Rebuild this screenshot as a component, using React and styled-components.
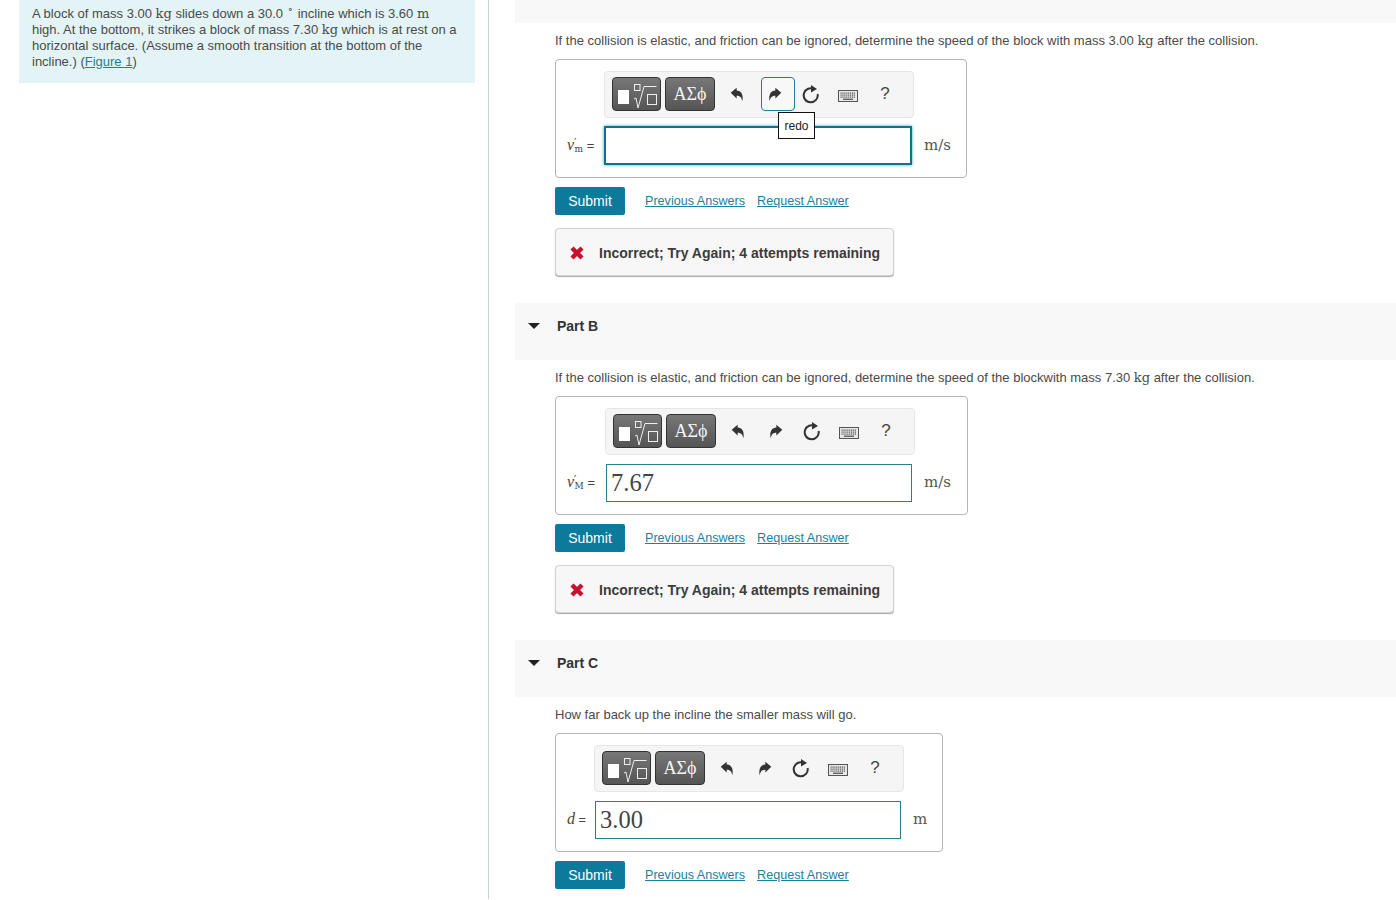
import React from 'react';
import styled, { createGlobalStyle } from 'styled-components';

const Global = createGlobalStyle`
html, body {
  margin: 0;
  padding: 0;
  height: 900px;
  overflow: hidden;
  background: #fff;
}
body {
  font-family: "Liberation Sans", Arial, sans-serif;
  color: #4a4a4a;
}
`

function UndoIcon({ flip }) {
  return (
    <svg width="14" height="15" viewBox="0 0 16 16" preserveAspectRatio="none" style={flip ? { transform: 'scaleX(-1)' } : undefined}>
      <path d="M0.8 6.2 L7.6 0.8 V3.8 C12.4 3.8 15.6 7.6 14.2 15.2 C13.2 11 11.4 9.3 7.6 9.3 V12.2 Z" fill="#333" />
    </svg>
  )
}

function ReloadIcon() {
  return (
    <svg width="18" height="20" viewBox="0 0 18 20">
      <path d="M12.2 5.2 A7 7 0 1 0 15.6 10" fill="none" stroke="#333" strokeWidth="2" />
      <path d="M9 1 L15 5 L9 8.4 Z" fill="#333" />
    </svg>
  )
}

function KeyboardIcon() {
  const keys = []
  for (let r = 0; r < 3; r++) {
    for (let c = 0; c < 8; c++) {
      keys.push(<rect key={r + '-' + c} x={2.5 + c * 1.9} y={2.5 + r * 2} width="1.2" height="1.2" fill="#555" />)
    }
  }
  return (
    <KeyboardSvg width="20" height="12" viewBox="0 0 20 12">
      <rect x="0.5" y="0.5" width="19" height="11" fill="#e8e8e8" stroke="#555" />
      {keys}
      <rect x="5" y="8.6" width="10" height="1.3" fill="#555" />
    </KeyboardSvg>
  )
}

function TemplateIcon() {
  return (
    <svg width="47" height="32" viewBox="0 0 47 32">
      <rect x="5" y="12" width="11" height="14" fill="#fff" />
      <rect x="21.5" y="6.5" width="5.5" height="6" fill="none" stroke="#eee" />
      <path d="M21 21 L23 20 L25 30 L31 8.5 H43.5" fill="none" stroke="#eee" />
      <rect x="34.5" y="16.5" width="9" height="10" fill="none" stroke="#eee" />
    </svg>
  )
}

function CrossIcon() {
  return (
    <svg width="14" height="14" viewBox="0 0 14 14">
      <path d="M2 2 L12 12 M12 2 L2 12" stroke="#c8102e" strokeWidth="4.4" />
    </svg>
  )
}

function MathLabel({ base, sub, prime }) {
  return (
    <Label>
      <Ital>{base}</Ital>
      {prime && <Prime>′</Prime>}
      {sub && <Sub>{sub}</Sub>}
      <Eq> =</Eq>
    </Label>
  )
}

function AnswerBox({ width, labelWidth, base, sub, prime, value, unit, focused }) {
  return (
    <Box $width={width} $labelWidth={labelWidth}>
      <Toolbar>
        <DarkButton $width={49}><TemplateIcon /></DarkButton>
        <DarkButton $width={50}>ΑΣϕ</DarkButton>
        <ToolButton $left={115}><UndoIcon /></ToolButton>
        <ToolButton $left={focused ? 156 : 153} $active={focused}>
          <UndoIcon flip />
          {focused && <Tooltip>redo</Tooltip>}
        </ToolButton>
        <ToolButton $left={189}><ReloadIcon /></ToolButton>
        <ToolButton $left={226}><KeyboardIcon /></ToolButton>
        <ToolButton $left={263}><Help>?</Help></ToolButton>
      </Toolbar>
      <MathLabel base={base} sub={sub} prime={prime} />
      <Input $focused={focused}>{value}</Input>
      <Unit $focused={focused}>{unit}</Unit>
    </Box>
  )
}

function Part({ title, height, prompt, feedback, children }) {
  return (
    <section>
      <PartHeader $height={height}>
        {title && <Caret />}
        {title && <PartTitle>{title}</PartTitle>}
      </PartHeader>
      <PartBody>
        <Prompt>{prompt}</Prompt>
        {children}
        <Actions>
          <Submit>Submit</Submit>
          <ActionLink href="#">Previous Answers</ActionLink>
          <ActionLink href="#">Request Answer</ActionLink>
        </Actions>
        {feedback && (
          <Feedback>
            <CrossIcon />
            <span>Incorrect; Try Again; 4 attempts remaining</span>
          </Feedback>
        )}
      </PartBody>
    </section>
  )
}

export default function App() {
  return (
    <Page>
      <Global />
      <LeftColumn>
        <Intro>
          A block of mass 3.00 <MathText>kg</MathText> slides down a 30.0 <Degree>∘</Degree> incline which is 3.60 <MathText>m</MathText> high.
          At the bottom, it strikes a block of mass 7.30 <MathText>kg</MathText> which is at rest on a horizontal surface. (Assume a smooth
          transition at the bottom of the incline.) (<FigureLink href="#">Figure 1</FigureLink>)
        </Intro>
      </LeftColumn>
      <RightColumn>
        <Part
          height={23}
          feedback
          prompt={<>If the collision is elastic, and friction can be ignored, determine the speed of the block with mass 3.00 <MathText>kg</MathText> after the collision.</>}
        >
          <AnswerBox width={412} labelWidth={38} base="v" prime sub="m" unit="m/s" focused />
        </Part>
        <Part
          title="Part B"
          height={57}
          feedback
          prompt={<>If the collision is elastic, and friction can be ignored, determine the speed of the blockwith mass 7.30 <MathText>kg</MathText> after the collision.</>}
        >
          <AnswerBox width={413} labelWidth={39} base="v" prime sub="M" value="7.67" unit="m/s" />
        </Part>
        <Part title="Part C" height={57} prompt="How far back up the incline the smaller mass will go.">
          <AnswerBox width={388} labelWidth={28} base="d" value="3.00" unit="m" />
        </Part>
      </RightColumn>
    </Page>
  )
}

const Page = styled.div`
display: flex;
height: 900px;
overflow: hidden;
`
const LeftColumn = styled.aside`
width: 489px;
flex: none;
box-sizing: border-box;
border-right: 1px solid #c6d0de;
padding-left: 19px;
height: 899px;
`
const Intro = styled.div`
width: 456px;
height: 83px;
box-sizing: border-box;
background: #e4f4f6;
padding: 6px 17px 0 13px;
font-size: 13px;
line-height: 16px;
`
const MathText = styled.span`
font-family: "DejaVu Serif", serif;
font-size: 13px;
`
const Degree = styled.sup`
font-family: "DejaVu Serif", serif;
font-size: 11px;
line-height: 0;
margin: 0 1px;
`
const FigureLink = styled.a`
color: #1c7f9c;
`
const RightColumn = styled.main`
flex: 1;
padding-left: 26px;
min-width: 0;
`
const PartHeader = styled.div`
height: ${props => props.$height}px;
background: #f8f8f8;
display: flex;
align-items: center;
padding: 0 0 ${props => props.$height > 30 ? 11 : 0}px 13px;
box-sizing: border-box;
`
const Caret = styled.span`
width: 0;
height: 0;
border-left: 6px solid transparent;
border-right: 6px solid transparent;
border-top: 6px solid #222;
margin-right: 17px;
`
const PartTitle = styled.span`
font-size: 14px;
font-weight: 700;
color: #333;
`
const PartBody = styled.div`
padding-left: 40px;
padding-bottom: 27px;
`
const Prompt = styled.div`
font-size: 13px;
line-height: 36px;
height: 36px;
white-space: nowrap;
`
const Box = styled.div`
width: ${props => props.$width}px;
height: 119px;
box-sizing: border-box;
border: 1px solid #b4b4b4;
border-radius: 4px;
padding: 11px 0 0 11px;
display: grid;
grid-template-columns: ${props => props.$labelWidth}px 306px auto;
grid-template-rows: 47px 39px;
row-gap: 8px;
align-items: center;
`
const Toolbar = styled.div`
grid-column: 2 / 4;
position: relative;
width: 310px;
height: 47px;
margin-left: -1px;
box-sizing: border-box;
background: #f5f5f5;
border: 1px solid #e6e6e6;
border-radius: 4px;
display: flex;
align-items: flex-start;
gap: 4px;
padding: 5px 0 0 7px;
`
const DarkButton = styled.div`
width: ${props => props.$width}px;
height: 34px;
box-sizing: border-box;
border: 1px solid #333;
border-radius: 4px;
background: linear-gradient(#777, #555);
color: #f4f4f4;
font-family: "Liberation Serif", serif;
font-size: 18px;
display: flex;
align-items: center;
justify-content: center;
`
const ToolButton = styled.div`
position: absolute;
left: ${props => props.$left}px;
top: 5px;
width: 34px;
height: 34px;
box-sizing: border-box;
display: flex;
align-items: center;
justify-content: center;
padding-right: ${props => props.$active ? 6 : 0}px;
border: 1px solid ${props => props.$active ? '#1d7f96' : 'transparent'};
border-radius: 4px;
background: ${props => props.$active ? '#f8f8f8' : 'transparent'};
`
const KeyboardSvg = styled.svg`
margin-top: 3px;
`
const Help = styled.span`
font-size: 17px;
color: #444;
`
const Tooltip = styled.div`
position: absolute;
left: 16px;
top: 34px;
width: 37px;
height: 27px;
box-sizing: border-box;
border: 1px solid #111;
background: #fff;
color: #222;
font-size: 12px;
display: flex;
align-items: center;
justify-content: center;
z-index: 2;
`
const Label = styled.div`
font-family: "Liberation Serif", serif;
font-size: 15px;
color: #444;
white-space: nowrap;
padding-bottom: 2px;
`
const Ital = styled.i`
font-size: 16px;
`
const Prime = styled.span`
font-family: "DejaVu Sans", sans-serif;
font-size: 11px;
vertical-align: 4px;
`
const Sub = styled.span`
font-family: "DejaVu Serif", serif;
font-size: 9px;
vertical-align: -2px;
margin-left: -2px;
`
const Eq = styled.span`
font-family: "Liberation Sans", sans-serif;
font-size: 13px;
`
const Input = styled.div`
height: ${props => props.$focused ? 39 : 38}px;
align-self: end;
box-sizing: border-box;
background: #fff;
border: ${props => props.$focused ? '2px solid #14718a' : '1px solid #2a7f8f'};
box-shadow: ${props => props.$focused ? '0 0 3px #3aa5c0' : 'none'};
margin: ${props => props.$focused ? '0 -1px' : '0'};
font-family: "Liberation Serif", serif;
font-size: 24.5px;
color: #444;
line-height: 35px;
padding-left: 4px;
`
const Unit = styled.div`
font-family: "DejaVu Serif", serif;
font-size: 15px;
color: #555;
margin-left: ${props => props.$focused ? 13 : 12}px;
padding-bottom: 2px;
`
const Actions = styled.div`
display: flex;
align-items: center;
margin-top: 9px;
height: 28px;
`
const Submit = styled.button`
width: 70px;
height: 28px;
border: none;
border-radius: 2px;
background: #0b7a9b;
color: #fff;
font-family: "Liberation Sans", sans-serif;
font-size: 14px;
padding: 0;
margin-right: 20px;
`
const ActionLink = styled.a`
color: #1c7f9c;
font-size: 12.6px;
margin-right: 12px;
`
const Feedback = styled.div`
width: 339px;
height: 48px;
margin-top: 13px;
box-sizing: border-box;
border: 1px solid #d2d2d2;
border-radius: 4px;
background: #f7f7f7;
box-shadow: 0 1px 1px #a8a8a8;
display: flex;
align-items: center;
gap: 15px;
padding: 2px 0 0 14px;
font-size: 14px;
font-weight: 700;
color: #3c3c3c;
white-space: nowrap;
`
